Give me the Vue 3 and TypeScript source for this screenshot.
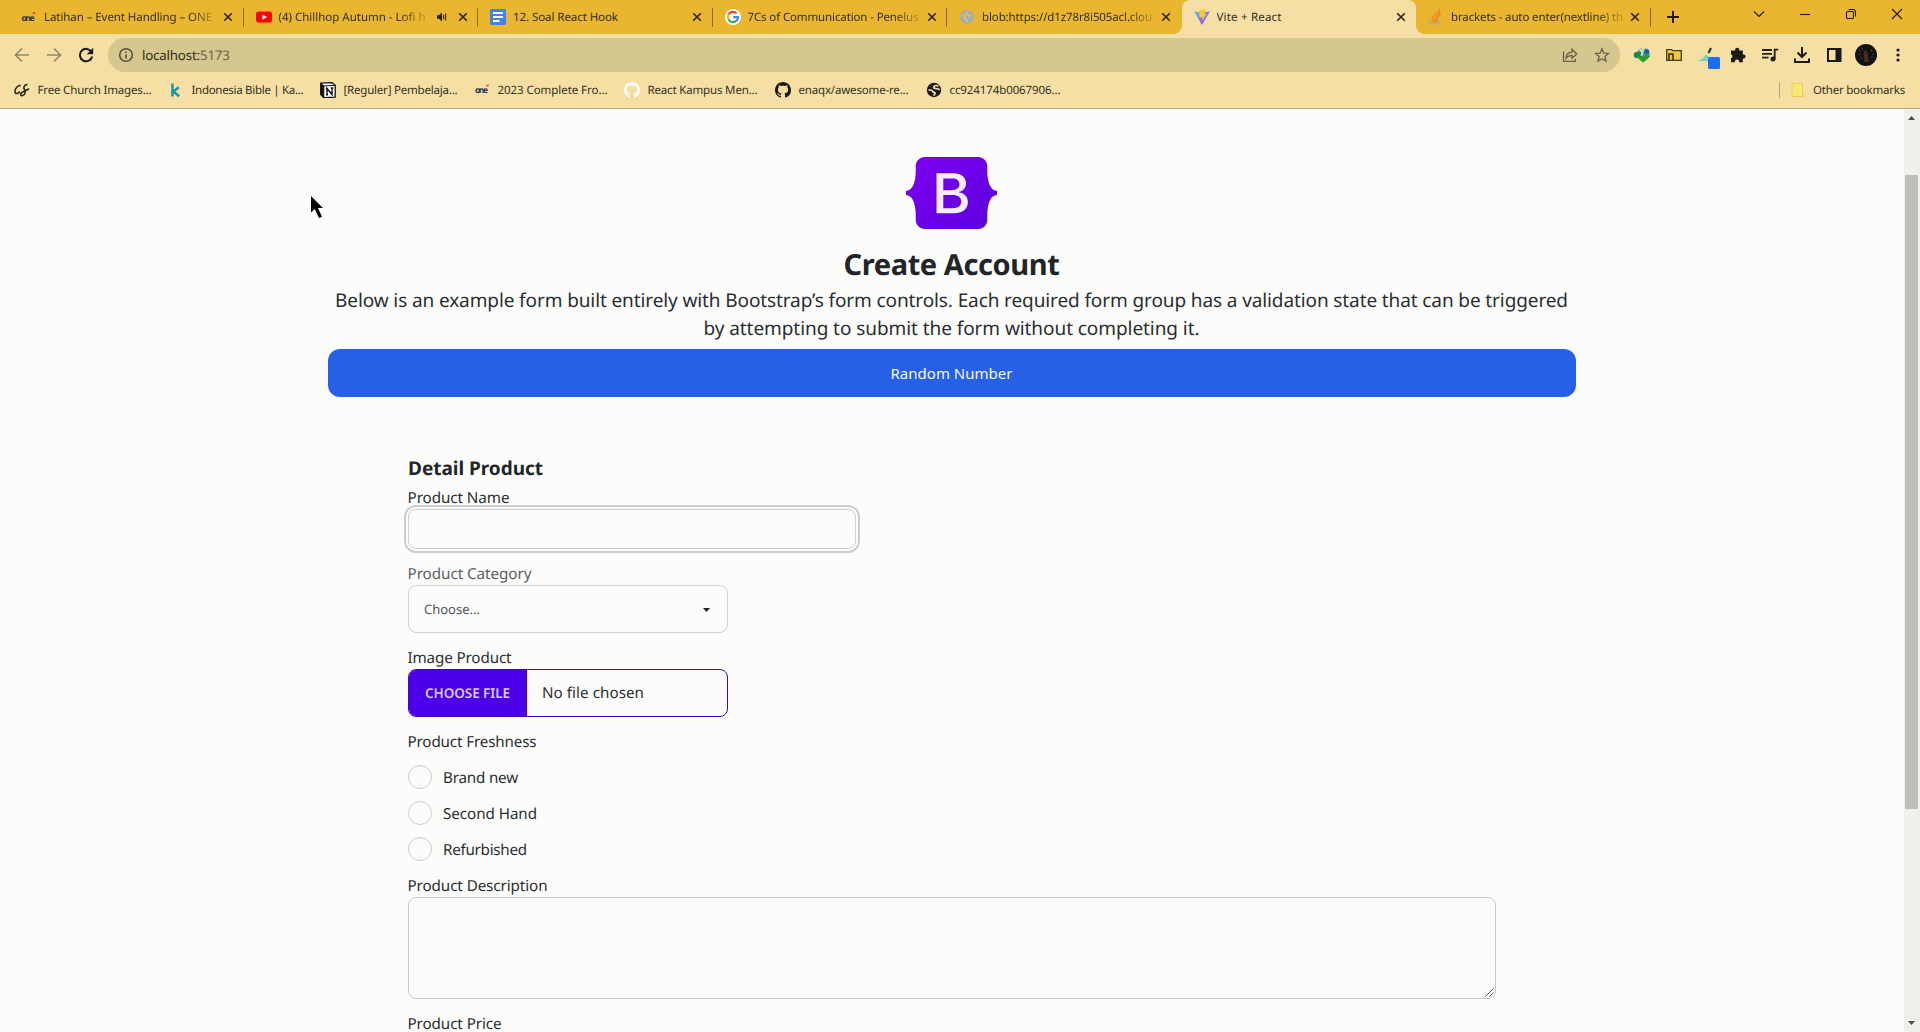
<script setup lang="ts">
import type { Directive } from 'vue'

interface Tab {
  icon: string
  title: string
  width: number
  fade?: boolean
  audio?: boolean
  active?: boolean
}

interface Bookmark {
  icon: string
  label: string
  slot: number
  width: number
}

const tabs: Tab[] = [
  { icon: 'one', title: 'Latihan – Event Handling – ONE', width: 168, fade: true },
  { icon: 'youtube', title: '(4) Chillhop Autumn - Lofi h', width: 147, fade: true, audio: true },
  { icon: 'docs', title: '12. Soal React Hook', width: 105 },
  { icon: 'google', title: '7Cs of Communication - Penelus', width: 171, fade: true },
  { icon: 'globe', title: 'blob:https://d1z78r8i505acl.clou', width: 170, fade: true },
  { icon: 'vite', title: 'Vite + React', width: 65, active: true },
  { icon: 'stack', title: 'brackets - auto enter(nextline) th', width: 172, fade: true },
]

const bookmarks: Bookmark[] = [
  { icon: 'cs', label: 'Free Church Images...', slot: 154, width: 114 },
  { icon: 'k', label: 'Indonesia Bible | Ka...', slot: 152, width: 112 },
  { icon: 'notion', label: '[Reguler] Pembelaja...', slot: 154, width: 114 },
  { icon: 'one', label: '2023 Complete Fro...', slot: 150, width: 110 },
  { icon: 'githubLight', label: 'React Kampus Men...', slot: 151, width: 110 },
  { icon: 'github', label: 'enaqx/awesome-re...', slot: 151, width: 110 },
  { icon: 'globeDark', label: 'cc924174b0067906...', slot: 151, width: 111 },
]

const conditions = [
  { label: 'Brand new', width: 75 },
  { label: 'Second Hand', width: 94 },
  { label: 'Refurbished', width: 84 },
]

const githubPath =
  'M8 0C3.58 0 0 3.58 0 8c0 3.54 2.29 6.53 5.47 7.59.4.07.55-.17.55-.38 0-.19-.01-.82-.01-1.49-2.01.37-2.53-.49-2.69-.94-.09-.23-.48-.94-.82-1.13-.28-.15-.68-.52-.01-.53.63-.01 1.08.58 1.23.82.72 1.21 1.87.87 2.33.66.07-.52.28-.87.51-1.07-1.78-.2-3.64-.89-3.64-3.95 0-.87.31-1.59.82-2.15-.08-.2-.36-1.02.08-2.12 0 0 .67-.21 2.2.82.64-.18 1.32-.27 2-.27s1.36.09 2 .27c1.53-1.04 2.2-.82 2.2-.82.44 1.1.16 1.92.08 2.12.51.56.82 1.27.82 2.15 0 3.07-1.87 3.75-3.65 3.95.29.25.54.73.54 1.48 0 1.07-.01 1.93-.01 2.2 0 .21.15.46.55.38A8.01 8.01 0 0 0 16 8c0-4.42-3.58-8-8-8z'

// Tracks a single line of text so that it fills the given width.
const vFit: Directive<HTMLElement, number> = {
  mounted(el, { value }) {
    const natural = el.getBoundingClientRect().width
    const count = (el.textContent ?? '').length
    if (count > 1) el.style.letterSpacing = `${((value - natural) / (count - 0.5)).toFixed(3)}px`
  },
}
</script>

<template>
  <div class="browser">
    <header class="chrome">
      <div class="tabstrip">
        <div v-for="(tab, i) in tabs" :key="i" class="tab" :class="{ active: tab.active, plain: i === 4 || i === 5 }">
          <svg class="favicon" viewBox="0 0 16 16">
            <template v-if="tab.icon === 'one'">
              <text x="0.5" y="11.5" class="brand-one" textLength="13">one</text>
              <path d="M10.800 4.600 14 2.800V5z" fill="#d9412c" />
            </template>
            <template v-else-if="tab.icon === 'youtube'">
              <rect y="2.6" width="16" height="11" rx="2.8" fill="#f00" />
              <path d="M6.4 5.5v5.2L11 8.1z" fill="#fff" />
            </template>
            <template v-else-if="tab.icon === 'docs'">
              <rect width="16" height="16" rx="1.4" fill="#3f83ee" />
              <path d="M3 4h10M3 8h10M3 12h6.5" stroke="#fff" stroke-width="2" />
            </template>
            <template v-else-if="tab.icon === 'google'">
              <circle cx="8" cy="8" r="8" fill="#fff" />
              <g fill="none" stroke-width="2.1">
                <path d="M11.6 4.3A5.1 5.1 0 0 0 3.5 5.6" stroke="#ea4335" />
                <path d="M3.5 5.6a5.1 5.1 0 0 0 0 4.8" stroke="#fbbc05" />
                <path d="M3.5 10.4a5.1 5.1 0 0 0 7.8 1.5" stroke="#34a853" />
                <path d="M11.3 11.9A5 5 0 0 0 13 8.1H8.2" stroke="#4285f4" />
              </g>
            </template>
            <template v-else-if="tab.icon === 'globe'">
              <circle cx="8" cy="8" r="7.2" fill="#a9aca8" />
              <path d="M2.500 6.500c3-.5 4 1 3 2.500s3.500 1 2.500 3.500M9 2.500c-.500 2-3 2-1.500 3.500s4-.5 5 1.500" fill="none" stroke="#e4c268" stroke-width="1.500" />
            </template>
            <template v-else-if="tab.icon === 'vite'">
              <defs>
                <linearGradient id="viteBack" x1="0" y1="0" x2=".7" y2="1">
                  <stop offset="0" stop-color="#4cc8ff" /><stop offset="1" stop-color="#b033f5" />
                </linearGradient>
              </defs>
              <path d="M0 2.200 8 3.600l8-1.400L8 16z" fill="url(#viteBack)" />
              <path d="M5 1.200 11.400 0 10.600 5l2-.4L8 12.500l.5-4.500-3 .6z" fill="#ffc928" />
            </template>
            <template v-else>
              <path d="M1.500 10.500v4.300h10v-4.300" fill="none" stroke="#b9a98c" stroke-width="1.400" />
              <path d="M3.400 12.600h6.200M3.500 10.300l6.100.8M4.200 7.700l5.800 1.900M5.700 5l5.100 3.200M8 2.300l3.700 4.700M10.800.6l1.500 5.500" stroke="#f0801e" stroke-width="1.300" />
            </template>
          </svg>
          <div class="tab-title" :class="{ faded: tab.fade, short: tab.audio }">
            <span v-fit="tab.width">{{ tab.title }}</span>
          </div>
          <svg v-if="tab.audio" class="audio" viewBox="0 0 12 12">
            <path d="M1 4.200h2L6 1.500v9L3 7.800H1z" fill="#2a2208" />
            <path d="M7.600 3.800v4.400M9.600 2.500v7" stroke="#2a2208" stroke-width="1.100" />
          </svg>
          <svg class="close" viewBox="0 0 10 10"><path d="m1.200 1.200 7.600 7.600M8.800 1.200 1.200 8.800" /></svg>
        </div>
        <svg class="new-tab" viewBox="0 0 12 12"><path d="M6 0v12M0 6h12" /></svg>
        <div class="window-buttons">
          <svg viewBox="0 0 12 12"><path d="m1 3.500 5 5 5-5" /></svg>
          <svg viewBox="0 0 12 12"><path d="M1 6.500h10" /></svg>
          <svg viewBox="0 0 12 12"><rect x="1.500" y="3.500" width="7" height="7" rx="1.300" /><path d="M3.500 1.500H8A2.500 2.500 0 0 1 10.500 4v4.500" /></svg>
          <svg viewBox="0 0 12 12"><path d="m1 1 10 10M11 1 1 11" /></svg>
        </div>
      </div>

      <div class="toolbar">
        <svg class="nav dim" viewBox="0 0 16 16"><path d="M15 8H2M8 1.500 1.500 8 8 14.500" /></svg>
        <svg class="nav dim" viewBox="0 0 16 16"><path d="M1 8h13M8 1.500 14.500 8 8 14.500" /></svg>
        <svg class="nav" viewBox="0 0 16 16">
          <path d="M13.300 4.600A6.200 6.200 0 1 0 14.200 9.500" />
          <path d="M15.200.8v6.400H8.800z" class="solid" />
        </svg>
        <div class="omnibox">
          <svg class="info" viewBox="0 0 16 16">
            <circle cx="8" cy="8" r="6.300" /><path d="M8 7.200v4.200M8 4.400v1.600" />
          </svg>
          <span class="url"><span v-fit="58">localhost:</span><span v-fit="30" class="port">5173</span></span>
          <svg class="share" viewBox="0 0 16 16">
            <path d="M1.500 4.500v9.800h11.800v-2.600" />
            <path d="M4 11c.3-4 2.500-5.700 6-5.900V2.200L14.700 7 10 11.200V8.500C7.500 8.400 5.700 9 4 11z" />
          </svg>
          <svg class="star" viewBox="0 0 16 16"><path d="m8 1.800 1.800 4.300 4.700.4-3.600 3 1.100 4.600L8 11.700 4 14.100l1.100-4.600-3.600-3 4.700-.4z" /></svg>
        </div>
        <div class="extensions">
          <svg viewBox="0 0 18 18">
            <circle cx="10.500" cy="8" r="6.200" fill="#4a86c8" />
            <path d="M6 4C8 1.500 12 1.500 14 3.500l-2 3.500-4-.5z" fill="#c5dfa0" />
            <circle cx="13.500" cy="5.500" r="2.600" fill="#2a58a8" />
            <ellipse cx="5" cy="9" rx="4.300" ry="3.200" fill="#17874a" />
            <path d="M4 9.500 10 11l4.500-4 2.500 3.500-6.500 6C7.500 15 5 13 4 9.500z" fill="#2aa02a" />
            <path d="m8.500 5.500 2 3.500-3 1z" fill="#f2f0a0" />
          </svg>
          <svg viewBox="0 0 18 18">
            <path d="M1.700 3.700h5l1 1h8.600v9.600H1.700z" fill="#f2c93c" stroke="#4b3c0a" stroke-width="1.300" />
            <path d="M4 14V8h4v6" fill="none" stroke="#332a0a" stroke-width="1.500" />
          </svg>
          <svg viewBox="0 0 18 18" class="overflowing">
            <path d="m14 2-2.500 5" stroke="#253f30" stroke-width="2.200" />
            <path d="M0 14.500c4 0 6-3 9-6l3 2-1 5z" fill="#7fd0b6" />
            <rect x="11" y="11" width="12" height="12" rx="1.500" fill="#1a6ff0" />
          </svg>
          <svg viewBox="0 0 18 18">
            <path d="M2 4.500h4.200a2.100 2.100 0 1 1 4 0h3.600v4a2.100 2.100 0 1 1 0 4v3.700H10a2.100 2.100 0 1 0-4 0H2v-4a2.100 2.100 0 0 0 0-4z" fill="#1b1a12" />
          </svg>
          <svg viewBox="0 0 18 18">
            <path d="M1 4h10M1 7.800h10M1 11.600h6.500" stroke="#242216" stroke-width="1.800" />
            <path d="M13.700 13V3.700H17.200" fill="none" stroke="#242216" stroke-width="1.800" />
            <circle cx="12" cy="13" r="2.500" fill="#242216" />
          </svg>
          <svg viewBox="0 0 18 18">
            <path d="M9 1v9.500M4.500 6.500 9 11l4.500-4.500M2 12.500V16h14v-3.500" fill="none" stroke="#1b1a12" stroke-width="2" />
          </svg>
          <svg viewBox="0 0 18 18">
            <path d="M3 3h12.500v12H3z" fill="none" stroke="#1b1a12" stroke-width="2" />
            <path d="M10.500 3h5v12h-5z" fill="#1b1a12" />
          </svg>
          <svg viewBox="0 0 22 22" class="avatar">
            <circle cx="11" cy="11" r="11" fill="#11120e" />
            <path d="m10.500 5-2 5 1 8h4l-.5-8z" fill="#4a2b22" />
            <path d="M4 6l2 2M16 5l1 3M5 14l2 1M16 14l2-1M3.500 10l2 .5M17 10.500l2-.5M7 4l1 2" stroke="#3c4a44" />
          </svg>
          <svg viewBox="0 0 18 18"><g fill="#1b1a12"><circle cx="9" cy="4" r="1.600" /><circle cx="9" cy="9" r="1.600" /><circle cx="9" cy="14" r="1.600" /></g></svg>
        </div>
      </div>

      <div class="bookmarks">
        <div v-for="mark in bookmarks" :key="mark.label" class="bookmark" :style="{ width: mark.slot + 'px' }">
          <svg viewBox="0 0 16 16">
            <path v-if="mark.icon === 'cs'" d="M6.500 3.800C4.500 2.800 1 6 1 9.500c0 3 3 2.500 4.800 0M13.500 2.800C11 2 9 5 10.300 7s1 6-1.500 6.500-3.300-1.300-.8-3 4.500-1.800 7-3.800" fill="none" stroke="#2b271b" stroke-width="1.600" />
            <path v-else-if="mark.icon === 'k'" d="M4.500 1.500v13M10.800 5.300 5.500 9.600l5.700 4.700" fill="none" stroke="#1796a8" stroke-width="2.500" />
            <template v-else-if="mark.icon === 'notion'">
              <path d="M.8 1.200 12 .6l3.200 2.600v12L3.600 15.600.8 12.500z" fill="#fff" stroke="#111" stroke-width="1.300" />
              <path d="M1 1.500 3.800 4v11.300L1 12.300zM3.500 4l11.500-.7" fill="#111" stroke="#111" />
              <path d="M7 12.800V6.500l5 6V6M5.800 6.400h2M10.800 6h2.500M6 12.800h2" fill="none" stroke="#111" stroke-width="1.400" />
            </template>
            <template v-else-if="mark.icon === 'one'">
              <text x="1" y="11" class="brand-one" textLength="13">one</text>
              <path d="M11.300 4.100 14.500 2.300V4.500z" fill="#d9412c" />
            </template>
            <path v-else-if="mark.icon === 'githubLight'" :d="githubPath" fill="#fffdf6" />
            <path v-else-if="mark.icon === 'github'" :d="githubPath" fill="#1b1a14" />
            <template v-else>
              <circle cx="8" cy="8" r="7.200" fill="#1b1a14" />
              <path d="M2.500 8.200c2-.4 3.500-.2 4 1 .4 1.400 2.800 1 2.600 2.300-.2 1-1.400 1.200-1.400 2.200M12.500 4.200c-1.500-.8-3.800-.8-4.600.4-.8 1.300.6 1.900 2 1.900 1.800 0 2.400 1 3.900.9" fill="none" stroke="#f4ddaa" stroke-width="1.700" />
            </template>
          </svg>
          <span v-fit="mark.width">{{ mark.label }}</span>
        </div>
        <div class="other">
          <svg viewBox="0 0 16 16"><path d="M2 1.500h10.500v13H2zM12.500 11l2 3.500h-2" fill="#fbe67c" stroke="#e9cb55" /></svg>
          <span v-fit="92">Other bookmarks</span>
        </div>
      </div>
    </header>

    <div class="viewport">
      <main class="page">
        <section class="intro">
          <svg class="logo" viewBox="0 0 91 72">
            <defs>
              <linearGradient id="logoFill" x1="0" y1="0" x2="1" y2="1">
                <stop offset="0" stop-color="#8000f2" /><stop offset="1" stop-color="#5a00dc" />
              </linearGradient>
            </defs>
            <path d="M19 0h53c5.500 0 9.500 4.500 9.300 9.500-.2 5-.1 11.500 1.600 16.500 1.600 5 4.200 7.400 8.100 7.900v4.200c-3.900.5-6.500 2.900-8.100 7.900-1.700 5-1.800 11.500-1.600 16.500.2 5-3.800 9.500-9.300 9.500H19c-5.500 0-9.500-4.500-9.300-9.500.2-5 .1-11.500-1.600-16.500C6.500 41 3.900 38.600 0 38.100v-4.200c3.900-.5 6.500-2.900 8.100-7.900 1.700-5 1.800-11.500 1.600-16.500C9.500 4.500 13.500 0 19 0z" fill="url(#logoFill)" />
            <path fill-rule="evenodd" d="M30.500 16.300h17c7.700 0 12.500 4 12.500 10.300 0 4.300-3 7.800-7.300 8.500v.2c5.500.6 9.200 4.500 9.200 9.800 0 6.900-5.200 11.200-13.700 11.200H30.500zM37.300 21.400V33.300h7.800c5.400 0 8.300-2.200 8.300-6.200 0-3.700-2.600-5.700-7.200-5.700zM37.300 38v13.200h9.200c5.700 0 8.700-2.300 8.700-6.600S52.100 38 46.100 38z" fill="#f4ecff" />
          </svg>
          <h1><span v-fit="216">Create Account</span></h1>
          <p>
            <span v-fit="1233">Below is an example form built entirely with Bootstrap’s form controls. Each required form group has a validation state that can be triggered</span>
            <span v-fit="496">by attempting to submit the form without completing it.</span>
          </p>
          <button class="random" type="button"><span v-fit="122">Random Number</span></button>
        </section>

        <form class="form">
          <h2><span v-fit="135">Detail Product</span></h2>
          <div class="field">
            <label><span v-fit="102">Product Name</span></label>
            <div class="text-input focused"></div>
          </div>
          <div class="field">
            <label class="soft"><span v-fit="124">Product Category</span></label>
            <div class="select">
              <span v-fit="56">Choose...</span>
              <svg viewBox="0 0 7 4"><path d="M0 0h7L3.500 4z" /></svg>
            </div>
          </div>
          <div class="field">
            <label><span v-fit="104">Image Product</span></label>
            <div class="file">
              <div class="file-button"><span v-fit="85">CHOOSE FILE</span></div>
              <div class="file-name"><span v-fit="102">No file chosen</span></div>
            </div>
          </div>
          <div class="field freshness">
            <label><span v-fit="129">Product Freshness</span></label>
            <div class="radios">
              <div v-for="item in conditions" :key="item.label" class="radio">
                <i></i><span v-fit="item.width">{{ item.label }}</span>
              </div>
            </div>
          </div>
          <div class="field">
            <label><span v-fit="140">Product Description</span></label>
            <div class="textarea">
              <svg viewBox="0 0 9 9"><path d="M.5 8.500l8-8M4.500 8.500l4-4" /></svg>
            </div>
          </div>
          <div class="field">
            <label><span v-fit="94">Product Price</span></label>
          </div>
        </form>
      </main>
      <div class="scrollbar">
        <svg viewBox="0 0 7 4"><path d="M3.500 0 7 4H0z" /></svg>
        <div class="track"><div class="thumb"></div></div>
        <svg viewBox="0 0 7 4"><path d="M0 0h7L3.500 4z" /></svg>
      </div>
    </div>

    <svg class="cursor" viewBox="0 0 13 23"><path d="M0 0v16.500l3.800-3.400L8 22l3-1.300-4-8.700h5z" /></svg>
  </div>
</template>

<style>
html,
body {
  margin: 0;
  overflow: hidden;
}
</style>

<style scoped>
* {
  box-sizing: border-box;
}
.browser {
  position: relative;
  display: flex;
  flex-direction: column;
  width: 1920px;
  height: 1032px;
  overflow: hidden;
  background: #fcfdfb;
  color: #2a2e32;
  font-family: 'Noto Sans', 'Open Sans', sans-serif;
  text-rendering: geometricPrecision;
}
svg {
  display: block;
  flex: none;
}
span {
  display: inline-block;
  white-space: pre;
}
.chrome {
  flex: none;
  height: 109px;
  background: #f5dfa5;
  border-bottom: 1px solid #b9ac80;
  color: #342f1e;
}
.tabstrip {
  display: flex;
  align-items: center;
  height: 34px;
  padding-left: 9px;
  background: #eab62f;
}
.tab {
  position: relative;
  display: flex;
  align-items: center;
  flex: none;
  width: 234.5px;
  height: 34px;
  padding: 0 10.5px 0 12px;
  font-size: 11.5px;
}
.tab:not(.plain)::after {
  content: '';
  position: absolute;
  right: 0;
  top: 8px;
  width: 1px;
  height: 19px;
  background: #8b6d1b;
}
.tab.active {
  background: #f5dfa5;
  border-radius: 8px 8px 0 0;
}
.tab.active::before,
.tab.active::after {
  content: '';
  position: absolute;
  bottom: 0;
  top: auto;
  width: 8px;
  height: 8px;
}
.tab.active::before {
  left: -8px;
  background: radial-gradient(circle at 0 0, transparent 7.5px, #f5dfa5 8px);
}
.tab.active::after {
  right: -8px;
  background: radial-gradient(circle at 100% 0, transparent 7.5px, #f5dfa5 8px);
}
.favicon {
  width: 16px;
  height: 16px;
  margin-right: 7px;
}
.brand-one {
  font: bold 8.500px 'Noto Sans', sans-serif;
  fill: #28334a;
}
.tab-title {
  flex: none;
  width: 174px;
  padding-top: 1px;
  overflow: hidden;
  line-height: 18px;
}
.tab-title.short {
  width: 149px;
}
.tab-title.faded {
  mask-image: linear-gradient(to right, #000 calc(100% - 28px), rgba(0, 0, 0, 0.12));
}
.audio {
  width: 12px;
  height: 12px;
  margin-left: 8px;
}
.close {
  width: 10px;
  height: 10px;
  margin-left: auto;
}
.close path {
  stroke: #2b2410;
  stroke-width: 1.600;
}
.new-tab {
  width: 12px;
  height: 12px;
  margin-left: 16px;
}
.new-tab path {
  stroke: #1d1808;
  stroke-width: 2;
}
.window-buttons {
  display: flex;
  gap: 34px;
  margin: 0 17px 6px auto;
}
.window-buttons svg {
  width: 12px;
  height: 12px;
  fill: none;
  stroke: #1d1808;
  stroke-width: 1.100;
}
.toolbar {
  display: flex;
  align-items: center;
  height: 42px;
  padding-left: 14px;
}
.nav {
  width: 16px;
  height: 16px;
  margin-right: 16px;
  fill: none;
  stroke: #1b1a12;
  stroke-width: 2;
}
.nav:nth-of-type(3) {
  margin-right: 14px;
}
.nav.dim {
  stroke: #938964;
  stroke-width: 1.700;
}
.nav .solid {
  fill: #1b1a12;
  stroke: none;
}
.omnibox {
  display: flex;
  align-items: center;
  width: 1512px;
  height: 34px;
  padding: 0 10px;
  border-radius: 17px;
  background: #d6c78e;
}
.omnibox svg {
  width: 16px;
  height: 16px;
  fill: none;
  stroke: #67614a;
  stroke-width: 1.300;
}
.omnibox .info {
  stroke: #55503c;
  stroke-width: 1.600;
}
.url {
  margin-left: 8px;
  font-size: 13.300px;
  line-height: 20px;
}
.port {
  color: #6b6148;
}
.omnibox .share {
  margin-left: auto;
}
.omnibox .star {
  margin-left: 16px;
}
.extensions {
  display: flex;
  align-items: center;
  gap: 14px;
  margin-left: 13px;
}
.extensions svg {
  width: 18px;
  height: 18px;
}
.extensions .overflowing {
  overflow: visible;
}
.extensions .avatar {
  width: 22px;
  height: 22px;
  margin: 0 -2px;
}
.bookmarks {
  display: flex;
  align-items: center;
  height: 28px;
  padding-left: 14px;
  font-size: 11.500px;
  line-height: 18px;
}
.bookmarks span {
  padding-top: 1px;
}
.bookmark {
  display: flex;
  align-items: center;
  flex: none;
}
.bookmarks svg {
  width: 16px;
  height: 16px;
  margin-right: 7.500px;
}
.other {
  display: flex;
  align-items: center;
  height: 16px;
  margin-left: auto;
  margin-right: 15px;
  padding-left: 10px;
  border-left: 1px solid #b7a878;
}
.viewport {
  display: flex;
  flex: 1;
  min-height: 0;
}
.page {
  display: flex;
  flex-direction: column;
  align-items: center;
  flex: 1;
  padding-top: 48px;
  overflow: hidden;
}
.intro {
  display: flex;
  flex-direction: column;
  align-items: center;
  width: 1248px;
}
.logo {
  width: 91px;
  height: 72px;
  margin-right: 1px;
}
h1 {
  margin: 18px 1px 0 0;
  color: #212529;
  font-size: 29px;
  line-height: 36px;
  font-weight: 700;
}
.intro p {
  display: flex;
  flex-direction: column;
  align-items: center;
  margin: 3px 1px 0 0;
  font-size: 19px;
  line-height: 28px;
}
.random {
  width: 100%;
  height: 48px;
  margin-top: 7px;
  padding: 0 1px 0 0;
  border: 0;
  border-radius: 12px;
  background: #2560e6;
  color: #f4f8ff;
  font: 15px/24px 'Noto Sans', sans-serif;
}
.form {
  display: flex;
  flex-direction: column;
  gap: 12px;
  flex: none;
  width: 1088px;
  margin-top: 56px;
  font-size: 15.200px;
  line-height: 24px;
}
h2 {
  height: 28px;
  margin: 0 0 -8px;
  padding-top: 1px;
  color: #212529;
  font-size: 19px;
  line-height: 28px;
  font-weight: 700;
}
.field {
  display: flex;
  flex-direction: column;
}
label {
  height: 24px;
  padding-top: 1px;
}
label span {
  margin-left: -0.5px;
}
label.soft {
  color: #5b5e61;
}
.text-input {
  width: 448px;
  height: 40px;
  border: 1px solid #cfcfd3;
  border-radius: 8px;
}
.focused {
  outline: 2px solid #cdcdd1;
  outline-offset: 2px;
}
.select {
  display: flex;
  align-items: center;
  justify-content: space-between;
  width: 320px;
  height: 48px;
  padding: 0 17px 0 15px;
  border: 1px solid #d0d0d4;
  border-radius: 8px;
  color: #505357;
  font-size: 13px;
}
.select svg {
  width: 7px;
  height: 4px;
  margin-top: 1px;
  fill: #212529;
}
.file {
  display: flex;
  align-items: stretch;
  width: 320px;
  height: 48px;
  overflow: hidden;
  border: 1px solid #4406b8;
  border-radius: 8px;
}
.file-button {
  display: flex;
  align-items: center;
  width: 118px;
  padding-left: 16px;
  background: #4b00e8;
  color: #d9ccf8;
  font-size: 13.500px;
  font-weight: 600;
}
.file-name {
  display: flex;
  align-items: center;
  padding-left: 15px;
}
.radios {
  display: flex;
  flex-direction: column;
  padding: 6px 0;
}
.freshness {
  margin-bottom: -12px;
}
.radio {
  display: flex;
  align-items: center;
  gap: 11px;
  height: 36px;
}
.radio span {
  padding-top: 2px;
}
.radio i {
  width: 24px;
  height: 24px;
  border: 1px solid #cbcbd0;
  border-radius: 50%;
}
.textarea {
  display: flex;
  align-items: flex-end;
  justify-content: flex-end;
  height: 102px;
  padding: 1px;
  border: 1px solid #c8c8cc;
  border-radius: 8px;
}
.textarea svg {
  width: 9px;
  height: 9px;
  stroke: #555;
}
.scrollbar {
  display: flex;
  flex-direction: column;
  align-items: center;
  width: 16px;
  padding: 7px 0;
  background: #efefec;
}
.scrollbar svg {
  width: 7px;
  height: 4px;
  margin-right: 1px;
  fill: #4b4b48;
}
.track {
  flex: 1;
  width: 13px;
  margin-right: 1px;
  padding-top: 55px;
}
.thumb {
  height: 634px;
  background: #bdbdbb;
}
.cursor {
  position: absolute;
  left: 311px;
  top: 196px;
  width: 13px;
  height: 23px;
}
</style>
